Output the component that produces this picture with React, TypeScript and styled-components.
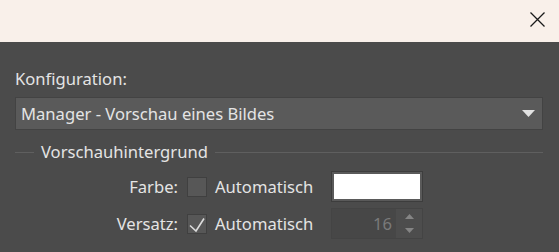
import React from 'react'
import styled, { createGlobalStyle } from 'styled-components'

const GlobalStyle = createGlobalStyle`
  html, body {
    margin: 0;
    padding: 0;
    background: #4b4b4b;
  }
  body {
    font-family: "Noto Sans", "Open Sans", sans-serif;
    font-size: 16.6px;
    color: #e4e4e4;
  }
`

const Window = styled.div`
  display: flex;
  flex-direction: column;
  width: 559px;
  height: 252px;
  overflow: hidden;
  background: #4b4b4b;
`

const TitleBar = styled.div`
  display: flex;
  justify-content: flex-end;
  align-items: center;
  height: 42px;
  padding-right: 14px;
  background: #f9f0ea;
  box-sizing: border-box;
`

const CloseButton = styled.button`
  display: flex;
  align-items: center;
  justify-content: center;
  width: 15px;
  height: 15px;
  padding: 0;
  border: none;
  background: none;
  margin-top: -3px;
`

const Body = styled.div`
  display: flex;
  flex-direction: column;
  padding: 0 16px 0 15px;
`

const Label = styled.div`
  line-height: 22px;
  margin-top: 26px;
`

const Combo = styled.div`
  display: flex;
  align-items: center;
  justify-content: space-between;
  height: 33px;
  margin-top: 7px;
  padding: 0 7px 0 5px;
  box-sizing: border-box;
  border: 1px solid #434343;
  background: #5a5a5a;
`

const GroupHeader = styled.div`
  display: flex;
  align-items: center;
  gap: 7px;
  margin-top: 11px;
  line-height: 22px;
`

const GroupLine = styled.div<{ $grow?: boolean }>`
  height: 1px;
  background: #5f5f5f;
  width: ${p => (p.$grow ? 'auto' : '19px')};
  flex: ${p => (p.$grow ? '1' : 'none')};
`

const Form = styled.div`
  display: grid;
  grid-template-columns: 163px 29px 124px 92px;
  grid-auto-rows: 31px;
  row-gap: 6px;
  align-items: center;
  margin-top: 8px;
`

const FieldLabel = styled.div`
  text-align: right;
`

const CheckBox = styled.div`
  justify-self: end;
  width: 20px;
  height: 20px;
  box-sizing: border-box;
  border: 1px solid #404040;
  background: #575757;
  display: flex;
  align-items: center;
  justify-content: center;
`

const CheckText = styled.div`
  padding-left: 8px;
  white-space: nowrap;
`

const Swatch = styled.div`
  height: 31px;
  box-sizing: border-box;
  border: 1px solid #3d3d3d;
  padding: 2px;
  background: #5a5a5a;
  display: flex;
`

const SwatchFill = styled.div`
  flex: 1;
  background: #ffffff;
`

const Spin = styled.div`
  display: flex;
  height: 31px;
  box-sizing: border-box;
  border: 1px solid #444444;
  background: #474747;
`

const SpinValue = styled.div`
  flex: 1;
  text-align: right;
  padding-right: 4px;
  color: #7a7a7a;
  line-height: 29px;
`

const SpinButtons = styled.div`
  width: 26px;
  background: #4d4d4d;
  display: flex;
  flex-direction: column;
  align-items: center;
  justify-content: center;
  gap: 9px;
`

const Arrow = ({ up, color, w, h }: { up?: boolean; color: string; w: number; h: number }) => (
  <svg width={w} height={h} viewBox={`0 0 ${w} ${h}`}>
    <polygon points={up ? `0,${h} ${w / 2},0 ${w},${h}` : `0,0 ${w},0 ${w / 2},${h}`} fill={color} />
  </svg>
)

export default function App() {
  return (
    <>
      <GlobalStyle />
      <Window>
        <TitleBar>
          <CloseButton>
            <svg width="15" height="15" viewBox="0 0 15 15">
              <path d="M0.5 0.5 L14.5 14.5 M14.5 0.5 L0.5 14.5" stroke="#1a1a1a" strokeWidth="1.3" />
            </svg>
          </CloseButton>
        </TitleBar>
        <Body>
          <Label>Konfiguration:</Label>
          <Combo>
            <span>Manager - Vorschau eines Bildes</span>
            <Arrow color="#e2e2e2" w={13} h={7} />
          </Combo>
          <GroupHeader>
            <GroupLine />
            <span>Vorschauhintergrund</span>
            <GroupLine $grow />
          </GroupHeader>
          <Form>
            <FieldLabel>Farbe:</FieldLabel>
            <CheckBox />
            <CheckText>Automatisch</CheckText>
            <Swatch>
              <SwatchFill />
            </Swatch>

            <FieldLabel>Versatz:</FieldLabel>
            <CheckBox>
              <svg width="18" height="18" viewBox="0 0 18 18">
                <polyline points="2,10.5 8,16 16,3.5" fill="none" stroke="#dcdcdc" strokeWidth="1.6" />
              </svg>
            </CheckBox>
            <CheckText>Automatisch</CheckText>
            <Spin>
              <SpinValue>16</SpinValue>
              <SpinButtons>
                <Arrow up color="#858585" w={9} h={5} />
                <Arrow color="#858585" w={9} h={5} />
              </SpinButtons>
            </Spin>
          </Form>
        </Body>
      </Window>
    </>
  )
}
